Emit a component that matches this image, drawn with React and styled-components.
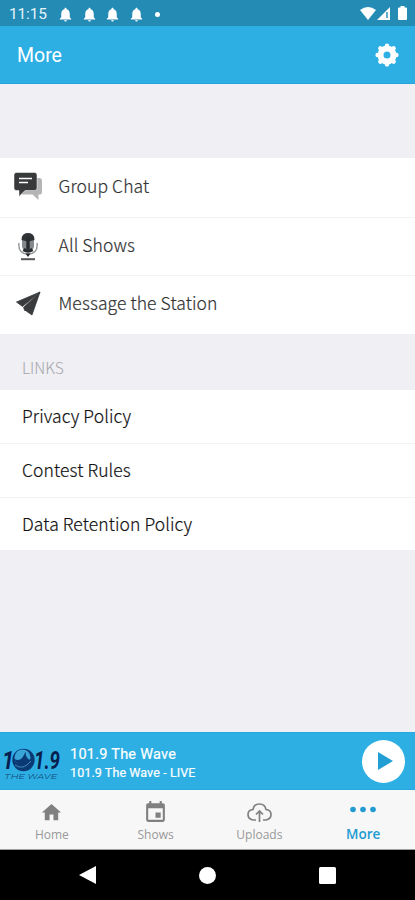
import styled, { createGlobalStyle } from "styled-components";
import { MdHome, MdEvent, MdNotifications } from "react-icons/md";

const blue = "#2dafe4";
const sourceSans = `"Noto Sans CJK JP", "Noto Sans", sans-serif`;

const GlobalStyle = createGlobalStyle`
  * {
    box-sizing: border-box;
  }
  body {
    margin: 0;
    font-family: Roboto, sans-serif;
  }
  svg {
    display: block;
    flex-shrink: 0;
    overflow: visible;
  }
`;

const Screen = styled.div`
  display: flex;
  flex-direction: column;
  width: 415px;
  height: 900px;
  overflow: hidden;
  background: #efeff4;
`;

const StatusBar = styled.div`
  display: flex;
  align-items: center;
  height: 26px;
  padding: 2px 7px 0 9px;
  color: #fff;
  background: #248bb5;
`;

const Clock = styled.span`
  width: 48px;
  font-size: 15.5px;
  letter-spacing: -0.15px;
  color: #e6f4fa;
`;

const Notifications = styled.div`
  display: flex;
  align-items: center;
  gap: 6.5px;
  flex: 1;
`;

const Dot = styled.span`
  width: 5px;
  height: 5px;
  margin-left: 4px;
  border-radius: 50%;
  background: #fff;
`;

const Header = styled.header`
  display: flex;
  align-items: center;
  justify-content: space-between;
  height: 58px;
  padding: 0 16px 0 17px;
  color: #fff;
  background: ${blue};
  border-bottom: 1px solid #25a3d8;
`;

const Title = styled.h1`
  margin: 3px 0 0;
  font-size: 19.5px;
  font-weight: 400;
  line-height: 24px;
`;

const Content = styled.main`
  flex: 1;
  padding-top: 74px;
`;

const List = styled.ul`
  margin: 0;
  padding: 0;
  list-style: none;
  background: #fff;
`;

const Row = styled.li`
  display: flex;
  align-items: center;
  height: ${props => props.$height}px;
  padding-left: ${props => props.$inset}px;
  padding-bottom: ${props => props.$lift}px;
  font-family: ${sourceSans};
  font-size: 17.5px;
  font-weight: 300;
  letter-spacing: 0.1px;
  color: ${props => props.$color};
  -webkit-text-stroke: 0.2px ${props => props.$color};

  & + & {
    border-top: 1px solid #f3f3f5;
  }
`;

const RowIcon = styled.span`
  width: 44.5px;
  padding-top: 3px;
`;

const SectionTitle = styled.h2`
  height: 56.5px;
  margin: 0;
  padding: 23px 0 0 22px;
  font-family: ${sourceSans};
  font-size: 15.5px;
  font-weight: 300;
  line-height: 20px;
  color: #a5a5aa;
`;

const Player = styled.section`
  display: flex;
  align-items: center;
  height: 58px;
  padding-right: 10px;
  color: #fff;
  background: ${blue};
  border-top: 1px solid #25a8df;
  border-bottom: 1px solid #25a8df;
`;

const Track = styled.div`
  flex: 1;
  padding: 5px 0 0 4px;
`;

const TrackLine = styled.div`
  font-size: ${props => props.$size}px;
  line-height: 18px;
  letter-spacing: ${props => props.$spacing}px;
  -webkit-text-stroke: 0.2px #fff;
`;

const PlayButton = styled.button`
  display: flex;
  align-items: center;
  justify-content: center;
  width: 43px;
  height: 43px;
  padding: 0 0 0 3px;
  border: 0;
  border-radius: 50%;
  background: #fff;
`;

const TabBar = styled.nav`
  display: grid;
  grid-template-columns: repeat(4, 1fr);
  height: 60px;
  background: #f7f7f7;
  border-bottom: 1px solid #a0a0a0;
`;

const Tab = styled.div`
  display: flex;
  flex-direction: column;
  align-items: center;
  padding-top: 9px;
  font-family: "Open Sans", sans-serif;
  font-size: ${props => (props.$active ? 13.5 : 12)}px;
  font-weight: ${props => (props.$active ? 600 : 400)};
  line-height: ${props => (props.$active ? 18 : 20)}px;
  color: ${props => (props.$active ? "#219bd1" : "#999")};
`;

const TabIcon = styled.span`
  display: flex;
  align-items: center;
  justify-content: center;
  height: 26px;
  color: ${props => (props.$active ? "#219bd1" : "#808080")};
`;

const SystemNav = styled.div`
  display: flex;
  align-items: center;
  justify-content: space-between;
  height: 50px;
  padding: 0 79px;
  background: #000;
`;

const GearIcon = () => (
  <svg width="24" height="24" viewBox="0 0 24 24" fill="none" stroke="#fff">
    <circle cx="12" cy="12" r="6.5" strokeWidth="6" />
    {[0, 45, 90, 135].map(angle => (
      <path
        key={angle}
        d="M12 2.6v2M12 19.400v2"
        strokeWidth="4.4"
        strokeLinecap="round"
        transform={`rotate(${angle} 12 12)`}
      />
    ))}
  </svg>
);

const ChatIcon = () => (
  <svg width="30" height="30" viewBox="0 0 30 30">
    <path d="M10 6h15q3 0 3 3v11q0 2.5-2 2.5h-1.5V28l-6-5.5H8z" fill="#b5b5b5" />
    <path
      d="M2.5 0.5h18q2.5 0 2.5 2.5v13q0 2.5-2.5 2.5H11l-6 6v-6H2.5Q0 18.5 0 16V3Q0 .5 2.5.5z"
      fill="#37393b"
      stroke="#fff"
      strokeWidth="0.5"
    />
    <path d="M5 6.5h13M5 10.5h9" stroke="#fff" strokeWidth="1.5" />
  </svg>
);

const MicIcon = () => (
  <svg width="30" height="30" viewBox="0 0 30 30">
    <rect x="8" y="2" width="12" height="19" rx="6" fill="#85898b" />
    <path d="M7.5 9q0-7 6.5-7t6.5 7l-4 1h-5z" fill="#303336" />
    <path d="M14 6v12M9.500 18.500q4.500 3 9 0" fill="none" stroke="#292c2e" strokeWidth="3.4" />
    <path
      d="M4.800 12v2q0 9 9.200 9t9.200-9v-2"
      fill="none"
      stroke="#9a9d9f"
      strokeWidth="1.5"
    />
    <path d="M11.500 22.500h5L14 26z" fill="#222" />
    <path d="M7 28.200h14" stroke="#555" strokeWidth="2" />
  </svg>
);

const PlaneIcon = () => (
  <svg width="30" height="30" viewBox="0 0 30 30">
    <path
      d="M26 3L2.500 13l6 4.500zM26 3L9.500 18.500l1.500 3.500zM26 3L11.500 21.500l6.500 4.500z"
      fill="#393b3d"
      stroke="#393b3d"
      strokeWidth="0.8"
    />
  </svg>
);

const StationLogo = () => (
  <svg width="66" height="48" viewBox="0 0 66 48">
    <g fill="#07204f" fontFamily="Roboto, sans-serif" fontStyle="italic">
      <text x="2" y="32" fontSize="26" fontWeight="700" textLength="12" lengthAdjust="spacingAndGlyphs">
        1
      </text>
      <text x="34" y="32" fontSize="26" fontWeight="700" textLength="26" lengthAdjust="spacingAndGlyphs">
        1.9
      </text>
      <text
        x="4"
        y="41.5"
        fontSize="8"
        fontWeight="300"
        fillOpacity="0.75"
        textLength="53"
        lengthAdjust="spacingAndGlyphs"
      >
        THE WAVE
      </text>
    </g>
    <circle cx="23.500" cy="23" r="11.200" fill="#0b3974" />
    <circle cx="22.500" cy="20.500" r="8" fill="#38a4d8" />
    <path d="M14.500 22q7 4 11-7.500 0 7 5 8.500-2 6-8 6.500-6-1-8-7.500z" fill="#0b3974" />
    <path d="M15 28q8 6 16-4" fill="none" stroke="#5baed3" strokeWidth="0.7" />
  </svg>
);

const UploadIcon = () => (
  <svg width="27" height="23" viewBox="0 0 27 23" fill="none" stroke="#808080" strokeWidth="1.7">
    <path d="M10 19H7Q2 18 2 13.500T7 8.500Q8 3 13.500 3T20 8.500Q25 9 25 13.500T20 19h-3" />
    <path d="M13.500 21V10M10 13.500L13.500 10l3.500 3.500" />
  </svg>
);

const StatusIcons = () => (
  <svg width="49" height="16" viewBox="0 0 49 16" fill="#fff">
    <path d="M1 4Q9-2 17 4L9 14z" />
    <path d="M31 1v13H18z" />
    <path d="M28 6v6" stroke="#248bb5" strokeWidth="1.4" />
    <path d="M39 2.500q0-1 1-1h1.500V0h4v1.500H47q1 0 1 1V13q0 1-1 1h-7q-1 0-1-1z" />
  </svg>
);

const stationRows = [
  { label: "Group Chat", icon: <ChatIcon /> },
  { label: "All Shows", icon: <MicIcon /> },
  { label: "Message the Station", icon: <PlaneIcon /> }
];

const links = ["Privacy Policy", "Contest Rules", "Data Retention Policy"];

const App = () => (
  <Screen>
    <GlobalStyle />
    <StatusBar>
      <Clock>11:15</Clock>
      <Notifications>
        {[0, 1, 2, 3].map(n => (
          <MdNotifications key={n} size={17} />
        ))}
        <Dot />
      </Notifications>
      <StatusIcons />
    </StatusBar>
    <Header>
      <Title>More</Title>
      <GearIcon />
    </Header>
    <Content>
      <List>
        {stationRows.map(row => (
          <Row key={row.label} $height={58.5} $inset={14} $lift={4} $color="#333">
            <RowIcon>{row.icon}</RowIcon>
            {row.label}
          </Row>
        ))}
      </List>
      <SectionTitle>LINKS</SectionTitle>
      <List>
        {links.map(label => (
          <Row key={label} $height={53.4} $inset={22} $lift={1.5} $color="#111">
            {label}
          </Row>
        ))}
      </List>
    </Content>
    <Player>
      <StationLogo />
      <Track>
        <TrackLine $size={14.5} $spacing={0.25}>101.9 The Wave</TrackLine>
        <TrackLine $size={12.5} $spacing={0.1}>101.9 The Wave - LIVE</TrackLine>
      </Track>
      <PlayButton aria-label="Play">
        <svg width="15" height="18" viewBox="0 0 15 18">
          <path d="M0 0l15 9-15 9z" fill="#219fd5" />
        </svg>
      </PlayButton>
    </Player>
    <TabBar>
      <Tab>
        <TabIcon><MdHome size={23} /></TabIcon>
        Home
      </Tab>
      <Tab>
        <TabIcon><MdEvent size={25} /></TabIcon>
        Shows
      </Tab>
      <Tab>
        <TabIcon><UploadIcon /></TabIcon>
        Uploads
      </Tab>
      <Tab $active>
        <TabIcon $active>
          <svg width="26" height="12" viewBox="0 0 26 12" fill="currentColor">
            <circle cx="3" cy="3.5" r="2.8" />
            <circle cx="13" cy="3.5" r="2.8" />
            <circle cx="23" cy="3.5" r="2.8" />
          </svg>
        </TabIcon>
        More
      </Tab>
    </TabBar>
    <SystemNav>
      <svg width="17" height="18" viewBox="0 0 17 18">
        <path d="M17 0v18L0 9z" fill="#fff" />
      </svg>
      <svg width="17" height="17" viewBox="0 0 17 17">
        <circle cx="8.5" cy="8.5" r="8.5" fill="#fff" />
      </svg>
      <svg width="17" height="17" viewBox="0 0 17 17">
        <rect width="17" height="17" rx="1.5" fill="#fff" />
      </svg>
    </SystemNav>
  </Screen>
);

export default App;
